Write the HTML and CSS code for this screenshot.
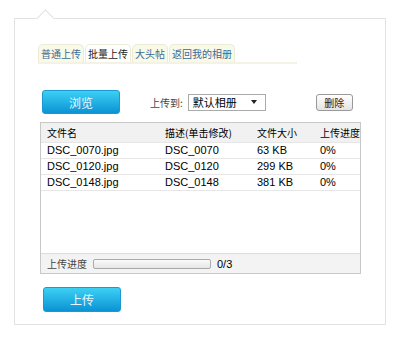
FILE: index.html
```html
<!DOCTYPE html>
<html lang="zh-CN">
<head>
    <meta charset="UTF-8">
    <title>批量上传</title>
    <link rel="stylesheet" href="styles.css">
</head>
<body>
    <div class="panel">
        <ul class="tabs">
            <li class="tab">普通上传</li>
            <li class="tab active">批量上传</li>
            <li class="tab">大头帖</li>
            <li class="tab">返回我的相册</li>
        </ul>

        <div class="toolbar">
            <button class="blue-btn">浏览</button>
            <span class="target-label">上传到:</span>
            <div class="select">
                <span>默认相册</span>
                <span class="caret"></span>
            </div>
            <button class="grey-btn">删除</button>
        </div>

        <div class="file-box">
            <table class="file-table">
                <thead>
                    <tr>
                        <th class="c-name">文件名</th>
                        <th class="c-desc">描述(单击修改)</th>
                        <th class="c-size">文件大小</th>
                        <th class="c-prog">上传进度</th>
                    </tr>
                </thead>
                <tbody>
                    <tr><td>DSC_0070.jpg</td><td>DSC_0070</td><td>63 KB</td><td>0%</td></tr>
                    <tr><td>DSC_0120.jpg</td><td>DSC_0120</td><td>299 KB</td><td>0%</td></tr>
                    <tr><td>DSC_0148.jpg</td><td>DSC_0148</td><td>381 KB</td><td>0%</td></tr>
                </tbody>
            </table>
            <div class="status">
                <span class="status-label">上传进度</span>
                <div class="progress"></div>
                <span class="count">0/3</span>
            </div>
        </div>

        <button class="blue-btn upload">上传</button>
    </div>
</body>
</html>
```

FILE: styles.css
```css
* {
    margin: 0;
    padding: 0;
    box-sizing: border-box;
}

body {
    background: #fff;
    font-family: "Liberation Sans", "Noto Sans CJK SC", sans-serif;
    font-size: 12px;
    color: #000;
}

.panel {
    position: relative;
    margin: 18px 0 0 14px;
    width: 372px;
    height: 307px;
    border: 1px solid #e2e2e2;
    padding: 25px 0 0 23px;
}

/* little notch on the top edge */
.panel::before {
    content: "";
    position: absolute;
    left: 24px;
    top: -7px;
    width: 12px;
    height: 12px;
    background: #fff;
    border-left: 1px solid #e2e2e2;
    border-top: 1px solid #e2e2e2;
    transform: rotate(45deg);
}

.tabs {
    display: flex;
    list-style: none;
    width: 259px;
    border-bottom: 2px solid #f4f2e4;
}

.tab {
    height: 18px;
    line-height: 17px;
    padding: 0 2px;
    margin-right: 1px;
    background: #f8f9e6;
    border: 1px solid #ecebd6;
    border-bottom: none;
    border-radius: 5px 5px 0 0;
    color: #3a6a9a;
    font-family: "Noto Sans CJK SC", sans-serif;
    font-size: 10px;
    white-space: nowrap;
}

.tab.active {
    background: #fff;
    color: #222;
}

.toolbar {
    display: flex;
    align-items: center;
    margin-top: 26px;
    padding-left: 4px;
    height: 24px;
}

.blue-btn {
    width: 78px;
    height: 24px;
    border: 1px solid #1a9ad0;
    border-radius: 3px;
    background: linear-gradient(#3cd0f4, #0b93d4);
    color: #eaf8ff;
    font-family: "Noto Sans CJK SC", sans-serif;
    font-size: 12px;
}

.target-label {
    margin-left: 30px;
    color: #444;
    font-family: "Noto Sans CJK SC", sans-serif;
    font-size: 10px;
}

.select {
    display: flex;
    align-items: center;
    justify-content: space-between;
    margin-left: 5px;
    width: 78px;
    height: 17px;
    padding: 0 8px 0 4px;
    border: 1px solid #aaa;
    font-family: "Noto Sans CJK SC", sans-serif;
    font-size: 11px;
}

.caret {
    width: 0;
    height: 0;
    border-left: 3px solid transparent;
    border-right: 3px solid transparent;
    border-top: 4px solid #222;
}

.grey-btn {
    margin-left: 50px;
    width: 37px;
    height: 17px;
    border: 1px solid #999;
    border-radius: 3px;
    background: linear-gradient(#fff, #e4e4e4);
    font-family: "Noto Sans CJK SC", sans-serif;
    font-size: 10px;
    color: #222;
}

.file-box {
    margin-top: 8px;
    margin-left: 2px;
    width: 321px;
    height: 152px;
    border: 1px solid #c8c8c8;
    display: flex;
    flex-direction: column;
    justify-content: space-between;
}

.file-table {
    width: 100%;
    border-collapse: collapse;
    table-layout: fixed;
}

.file-table th {
    height: 19px;
    background: #f1f1f1;
    font-weight: normal;
    text-align: left;
    font-family: "Noto Sans CJK SC", sans-serif;
    font-size: 10px;
    padding-left: 6px;
    white-space: nowrap;
    border-bottom: 1px solid #e6e6e6;
}

.file-table td {
    height: 16px;
    padding-left: 6px;
    border-bottom: 1px solid #e6e6e6;
    font-size: 11px;
    white-space: nowrap;
}

.c-name { width: 118px; }
.c-desc { width: 92px; }
.c-size { width: 63px; }

.status {
    display: flex;
    align-items: center;
    height: 20px;
    background: #f3f3f3;
    border-top: 1px solid #dcdcdc;
    padding-left: 6px;
}

.status-label {
    color: #444;
    font-family: "Noto Sans CJK SC", sans-serif;
    font-size: 10px;
}

.progress {
    margin-left: 6px;
    width: 118px;
    height: 10px;
    border: 1px solid #aaa;
    border-radius: 2px;
    background: linear-gradient(#fafafa, #e6e6e6);
}

.count {
    margin-left: 6px;
    font-size: 11px;
}

.upload {
    margin-top: 13px;
    margin-left: 5px;
    height: 25px;
}
```
